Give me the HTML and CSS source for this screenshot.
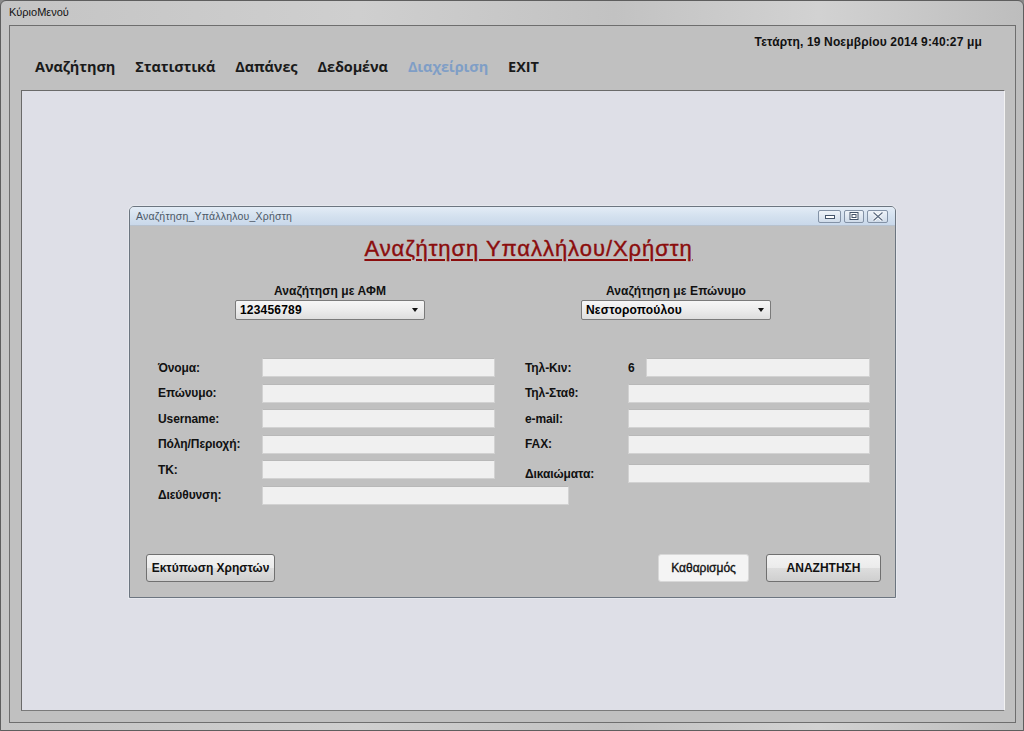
FILE: index.html
```html
<!DOCTYPE html>
<html lang="el">
<head>
<meta charset="utf-8">
<title>ΚύριοΜενού</title>
<link rel="stylesheet" href="styles.css">
</head>
<body>
<div class="window">
  <div class="titlebar">ΚύριοΜενού</div>
  <div class="client">
    <div class="topbar">
      <div class="date">Τετάρτη, 19 Νοεμβρίου 2014 9:40:27 μμ</div>
      <nav class="menu">
        <span class="item">Αναζήτηση</span>
        <span class="item">Στατιστικά</span>
        <span class="item">Δαπάνες</span>
        <span class="item">Δεδομένα</span>
        <span class="item disabled">Διαχείριση</span>
        <span class="item">EXIT</span>
      </nav>
    </div>
    <div class="mdi">
      <div class="dialog">
        <div class="dlg-title">
          <span class="dlg-caption">Αναζήτηση_Υπάλληλου_Χρήστη</span>
          <div class="dlg-buttons">
            <span class="cbtn cmin"><svg width="10" height="6" viewBox="0 0 10 6"><rect x="0.5" y="2.5" width="9" height="3" fill="#fff" stroke="#44546a"/></svg></span>
            <span class="cbtn cmax"><svg width="10" height="8" viewBox="0 0 10 8"><rect x="1" y="0.5" width="8" height="7" fill="#fff" stroke="#44546a"/><rect x="3" y="2.5" width="4" height="3" fill="none" stroke="#44546a"/></svg></span>
            <span class="cbtn cclose"><svg width="12" height="9" viewBox="0 0 12 9"><path d="M1.5 0.5 L10.5 8.5 M10.5 0.5 L1.5 8.5" fill="none" stroke="#ffffff" stroke-width="3"/><path d="M1.5 0.5 L10.5 8.5 M10.5 0.5 L1.5 8.5" fill="none" stroke="#5a6a80" stroke-width="1.2"/></svg></span>
          </div>
        </div>
        <div class="dlg-body">
          <h1 class="heading">Αναζήτηση Υπαλλήλου/Χρήστη</h1>
          <div class="search-row">
            <div class="search-group sg-afm">
              <div class="search-label">Αναζήτηση με ΑΦΜ</div>
              <div class="combo"><span>123456789</span><span class="arrow"></span></div>
            </div>
            <div class="search-group sg-surname">
              <div class="search-label">Αναζήτηση με Επώνυμο</div>
              <div class="combo"><span>Νεστοροπούλου</span><span class="arrow"></span></div>
            </div>
          </div>
          <div class="form">
            <div class="col col-left">
              <div class="row"><label>Όνομα:</label><div class="input"></div></div>
              <div class="row"><label>Επώνυμο:</label><div class="input"></div></div>
              <div class="row"><label>Username:</label><div class="input"></div></div>
              <div class="row"><label>Πόλη/Περιοχή:</label><div class="input"></div></div>
              <div class="row"><label>ΤΚ:</label><div class="input"></div></div>
              <div class="row"><label>Διεύθυνση:</label><div class="input wide"></div></div>
            </div>
            <div class="col col-right">
              <div class="row"><label>Τηλ-Κιν:</label><span class="prefix">6</span><div class="input short"></div></div>
              <div class="row"><label>Τηλ-Σταθ:</label><div class="input"></div></div>
              <div class="row"><label>e-mail:</label><div class="input"></div></div>
              <div class="row"><label>FAX:</label><div class="input"></div></div>
              <div class="row row-rights"><label>Δικαιώματα:</label><div class="input"></div></div>
            </div>
          </div>
          <div class="actions">
            <button class="btn btn-print">Εκτύπωση Χρηστών</button>
            <div class="spacer"></div>
            <button class="btn btn-clear">Καθαρισμός</button>
            <button class="btn btn-search">ΑΝΑΖΗΤΗΣΗ</button>
          </div>
        </div>
      </div>
    </div>
  </div>
</div>
</body>
</html>
```
FILE: styles.css
```css
* { box-sizing: border-box; }
html, body { margin: 0; padding: 0; }
body {
  width: 1024px;
  height: 731px;
  overflow: hidden;
  background: #8a8a8a;
  font-family: "Liberation Sans", Arial, sans-serif;
}
.window {
  width: 1024px;
  height: 731px;
  border: 1px solid #5e5e5e;
  border-radius: 6px 6px 0 0;
  background: linear-gradient(90deg, #c4c4c4 0%, #cfcfcf 35%, #c2c2c2 60%, #d2d2d2 80%, #bdbdbd 100%);
  padding: 0 7px 7px 8px;
  display: flex;
  flex-direction: column;
}
.titlebar {
  height: 24px;
  font-size: 11px;
  color: #111;
  padding: 5px 0 0 0;
}
.client {
  flex: 1;
  border: 1px solid #6e6e6e;
  background: #c0c0c0;
  display: flex;
  flex-direction: column;
  padding: 0 10px 11px 11px;
}
.topbar {
  height: 64px;
  display: flex;
  flex-direction: column;
}
.date {
  align-self: flex-end;
  margin: 9px 23px 0 0;
  font-size: 12px;
  font-weight: bold;
  color: #111;
  letter-spacing: 0.15px;
}
.menu {
  display: flex;
  margin: 8px 0 0 14px;
}
.item {
  font-family: "Open Sans", "Noto Sans", sans-serif;
  font-weight: bold;
  font-size: 14.5px;
  color: #1a1a1a;
  margin-right: 20px;
  letter-spacing: -0.1px;
}
.item.disabled { color: #7f9ec6; }
.mdi {
  position: relative;
  flex: 1;
  background: #dedfe7;
  border-top: 1px solid #6a6a6a;
  border-left: 1px solid #6a6a6a;
  border-right: 1px solid #f2f2f2;
  border-bottom: 1px solid #7a7a7a;
}
.dialog {
  position: absolute;
  left: 107px;
  top: 115px;
  width: 767px;
  height: 392px;
  border: 1px solid #6c7580;
  border-radius: 5px 5px 0 0;
  background: #c0c0c0;
  display: flex;
  flex-direction: column;
  box-shadow: 0 0 0 1px #e6e8ee;
}
.dlg-title {
  height: 19px;
  background: linear-gradient(180deg, #e3ecf6 0%, #d4e1ef 50%, #c9d8ea 100%);
  border-bottom: 1px solid #b7c2cf;
  display: flex;
  align-items: center;
  padding: 0 0 0 6px;
  border-radius: 4px 4px 0 0;
}
.dlg-caption {
  font-size: 10.5px;
  color: #4c5866;
  flex: 1;
  letter-spacing: 0.2px;
}
.dlg-buttons {
  display: flex;
  gap: 3px;
  margin-right: 7px;
}
.cbtn {
  width: 20px;
  height: 13px;
  border: 1px solid #8392a6;
  border-radius: 2px;
  background: linear-gradient(180deg, #eef3f9, #cfdbe9);
  display: flex;
  align-items: center;
  justify-content: center;
}
.cbtn.cmin { width: 23px; }
.cbtn.cclose { width: 21px; }
.dlg-body {
  flex: 1;
  display: flex;
  flex-direction: column;
  padding: 0 14px 0 15px;
}
.heading {
  margin: 10px 0 0 31px;
  text-align: center;
  font-size: 22px;
  font-weight: normal;
  color: #8b0d0d;
  text-decoration: underline;
  text-decoration-thickness: 2px;
  text-underline-offset: 3px;
  height: 30px;
  line-height: 26px;
  letter-spacing: 0.95px;
  -webkit-text-stroke: 0.4px #8b0d0d;
}
.search-row {
  display: flex;
  margin-top: 19px;
}
.sg-afm { margin-left: 90px; }
.sg-surname { margin-left: 156px; }
.search-group {
  width: 190px;
  display: flex;
  flex-direction: column;
  align-items: center;
}
.search-label {
  font-size: 12px;
  font-weight: bold;
  color: #111;
  letter-spacing: 0.1px;
  height: 15px;
  line-height: 13px;
}
.combo {
  width: 190px;
  height: 20px;
  border: 1px solid #7a7a7a;
  border-radius: 2px;
  background: linear-gradient(180deg, #f6f6f6 0%, #ececec 50%, #dedede 100%);
  display: flex;
  align-items: center;
  justify-content: space-between;
  padding: 0 6px 0 4px;
  font-size: 12px;
  font-weight: bold;
  color: #000;
  letter-spacing: 0.2px;
}
.arrow {
  width: 0;
  height: 0;
  border-left: 3.5px solid transparent;
  border-right: 3.5px solid transparent;
  border-top: 4px solid #111;
}
.form {
  display: flex;
  margin-top: 35px;
}
.col {
  display: flex;
  flex-direction: column;
}
.col-left { width: 367px; flex-shrink: 0; margin-left: 13px; }
.col-right { margin-left: 0; }
.row {
  display: flex;
  align-items: center;
  height: 25.5px;
}
.row label {
  font-size: 12px;
  font-weight: bold;
  color: #111;
  letter-spacing: -0.1px;
  flex-shrink: 0;
}
.col-left .row label { width: 104px; }
.col-right .row label { width: 103px; }
.input {
  flex-shrink: 0;
  width: 233px;
  height: 19px;
  background: #f0f0f0;
  border: 1px solid #d2d2d2;
  border-top-color: #b8b8b8;
}
.input.wide { width: 307px; }
.col-right .input { width: 242px; }
.col-right .input.short { width: 224px; }
.prefix {
  width: 18px;
  font-size: 12px;
  font-weight: bold;
  color: #111;
}
.row-rights {
  margin-top: 4px;
}
.actions {
  display: flex;
  margin-top: auto;
  margin-bottom: 15px;
  align-items: center;
}
.spacer { flex: 1; }
.btn {
  height: 28px;
  font-family: "Liberation Sans", Arial, sans-serif;
  font-size: 12px;
  font-weight: bold;
  color: #111;
  letter-spacing: 0;
  border: 1px solid #707070;
  border-radius: 3px;
  background: linear-gradient(180deg, #f3f3f3 0%, #ebebeb 50%, #dddddd 51%, #cfcfcf 100%);
  padding: 0;
}
.btn-print { width: 129px; margin-left: 1px; }
.btn-clear {
  width: 91px;
  background: #f4f4f4;
  border-color: #d8d8d8;
  font-weight: normal;
  -webkit-text-stroke: 0.35px #111;
}
.btn-search { width: 115px; margin-left: 17px; }
```
